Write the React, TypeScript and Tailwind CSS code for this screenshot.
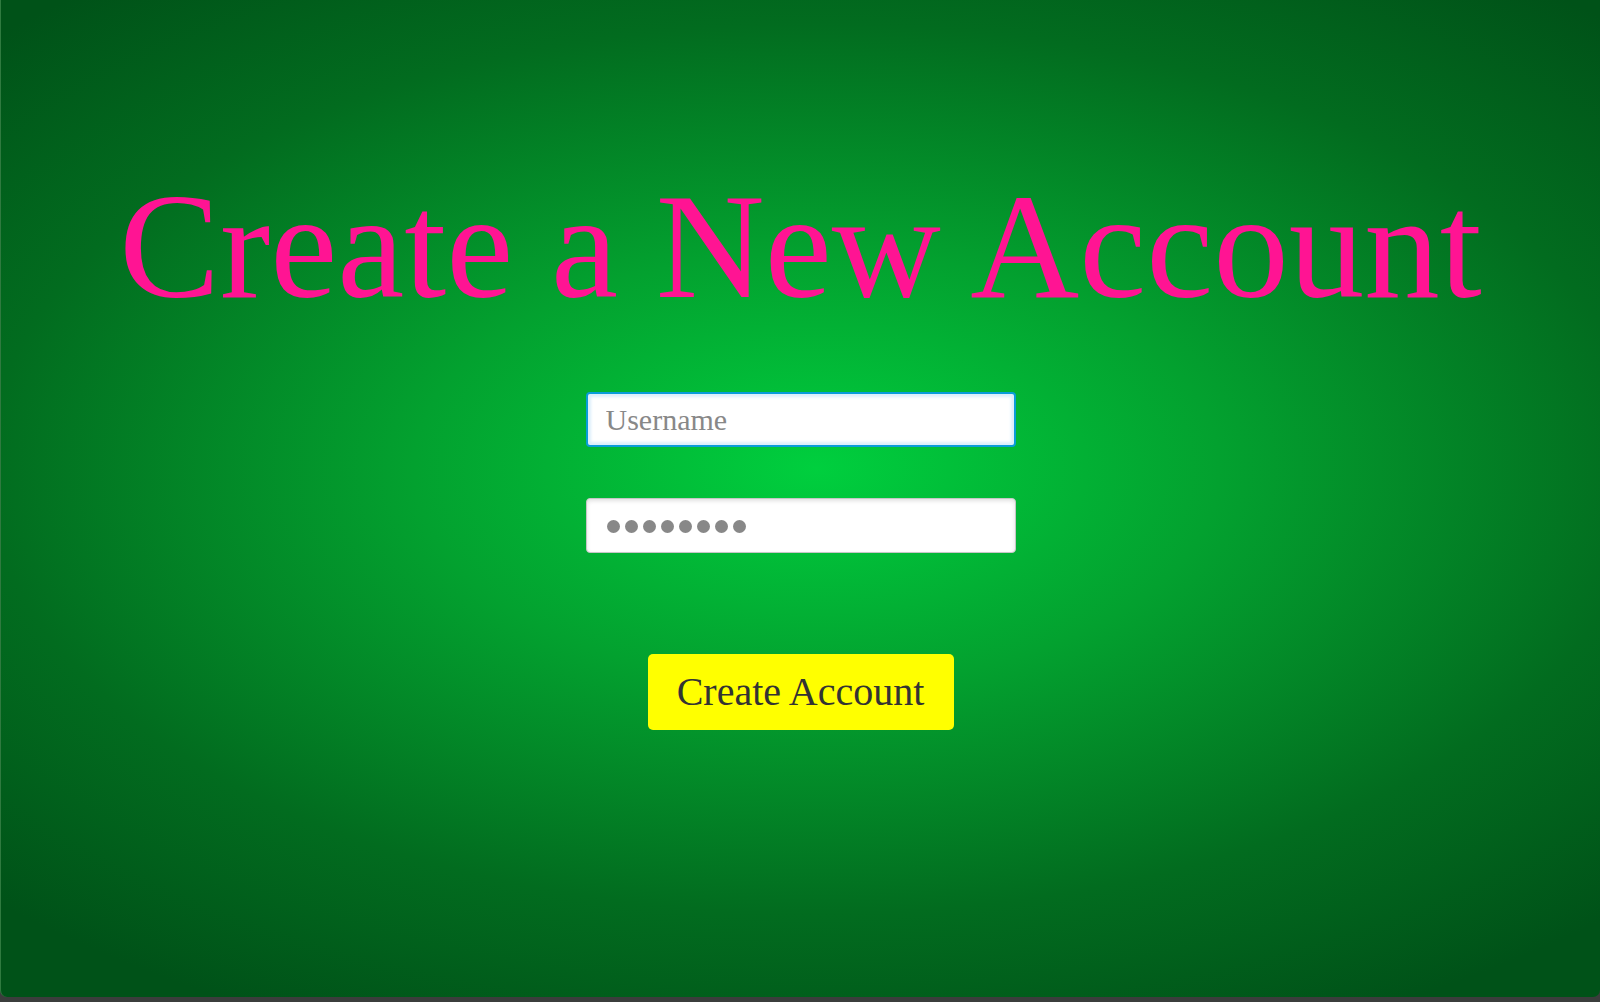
import React from "react";

export default function App() {
  return (
    <div className="w-[1600px] h-[1002px] bg-[#3b3d3c] overflow-hidden">
      <div
        className="w-[1600px] h-[997px] rounded-b-[7px] border-l border-[#2f7a3f] flex flex-col items-center bg-[radial-gradient(ellipse_72%_62%_at_51%_47%,#00cf3e_0%,#03a12f_35%,#026c1f_72%,#005218_100%)]"
        style={{ fontFamily: '"Liberation Serif", "Times New Roman", serif' }}
      >
        <h1 className="pt-[171px] text-[151px] leading-none text-[#ff1493] font-normal whitespace-nowrap">
          Create a New Account
        </h1>
        <form className="flex flex-col items-center" onSubmit={(e) => e.preventDefault()}>
          <input
            type="text"
            placeholder="Username"
            className="mt-[70px] w-[430px] h-[55px] rounded-[4px] border-2 border-[#0a9cd9] bg-white pl-[18px] text-[30px] text-[#333] placeholder:text-[#888] outline-none shadow-[inset_0_0_3px_3px_#dbeffb]"
            style={{ fontFamily: '"Liberation Serif", "Times New Roman", serif' }}
          />
          <div className="mt-[51px] w-[430px] h-[55px] rounded-[4px] border border-[#c6c6c6] bg-white pl-[20px] flex items-center gap-[5px] pt-[2px] shadow-[inset_0_2px_4px_rgba(0,0,0,0.12)]">
            {Array.from({ length: 8 }).map((_, i) => (
              <span key={i} className="w-[13px] h-[13px] rounded-full bg-[#888888]" />
            ))}
          </div>
          <button
            type="submit"
            className="mt-[101px] w-[306px] h-[76px] rounded-[5px] bg-[#ffff00] text-[40px] leading-none text-[#333333]"
            style={{ fontFamily: '"Liberation Serif", "Times New Roman", serif' }}
          >
            Create Account
          </button>
        </form>
      </div>
    </div>
  );
}
